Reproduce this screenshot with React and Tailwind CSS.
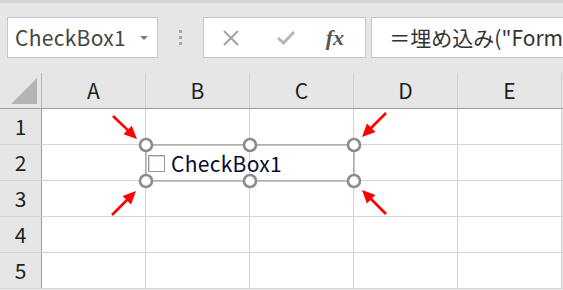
import React from "react";

const COLS = ["A", "B", "C", "D", "E"];
const ROWS = [1, 2, 3, 4, 5];

// red arrow: shaft + triangular head, tip at (x2, y2)
function Arrow({ x1, y1, x2, y2 }) {
    const dx = x2 - x1, dy = y2 - y1;
    const len = Math.hypot(dx, dy);
    const ux = dx / len, uy = dy / len;
    const hl = 13, hw = 6;
    const bx = x2 - ux * hl, by = y2 - uy * hl;
    const pts = [
        [x2, y2],
        [bx - uy * hw, by + ux * hw],
        [bx + uy * hw, by - ux * hw],
    ].map(p => p.join(",")).join(" ");
    return (
        <g>
            <line x1={x1} y1={y1} x2={bx + ux * 2} y2={by + uy * 2} stroke="#ff0000" strokeWidth="2.6" />
            <polygon points={pts} fill="#ff0000" />
        </g>
    );
}

export default function App() {
    const font = { fontFamily: '"Noto Sans CJK JP", "Noto Sans", sans-serif' };
    return (
        <div className="relative w-[563px] h-[290px] overflow-hidden bg-[#e6e6e6]" style={font}>
            <div className="h-[3px] bg-[#d6d6d6]" />
            {/* formula bar */}
            <div className="flex items-start h-[70px] pt-[14px]">
                <div className="ml-[7px] w-[151px] h-[41px] bg-white border border-[#c6c6c6] flex items-center pl-[7px] pr-[9px]">
                    <span className="text-[21px] text-[#444] leading-none flex-1 tracking-[0.3px]">CheckBox1</span>
                    <span className="w-0 h-0 border-l-[4px] border-r-[4px] border-t-[4px] border-l-transparent border-r-transparent border-t-[#7a7a7a]" />
                </div>
                <div className="ml-[21px] mt-[13px] flex flex-col gap-[3px]">
                    <div className="w-[3px] h-[3px] bg-[#a6a6a6]" />
                    <div className="w-[3px] h-[3px] bg-[#a6a6a6]" />
                    <div className="w-[3px] h-[3px] bg-[#a6a6a6]" />
                </div>
                <div className="ml-[21px] w-[164px] h-[41px] bg-white border border-[#c6c6c6] flex items-center">
                    <svg width="18" height="18" viewBox="0 0 18 18" className="ml-[18px]">
                        <path d="M2 2 L16 16 M16 2 L2 16" stroke="#a3a3a3" strokeWidth="2" />
                    </svg>
                    <svg width="20" height="16" viewBox="0 0 20 16" className="ml-[36px]">
                        <path d="M2 8 L7.5 13 L18 2" stroke="#b5b5b5" strokeWidth="3" fill="none" />
                    </svg>
                    <span className="ml-[30px] text-[22px] italic font-bold text-[#555] leading-none" style={{ fontFamily: '"Liberation Serif", serif' }}>fx</span>
                </div>
                <div className="ml-[5px] flex-1 h-[41px] bg-white border border-r-0 border-[#c6c6c6] flex items-center pl-[17px]">
                    <span className="text-[21px] text-[#333] leading-none whitespace-nowrap">＝埋め込み("Form</span>
                </div>
            </div>
            {/* column headers */}
            <div className="flex h-[36px] border-b border-[#9f9f9f]">
                <div className="w-[42px] shrink-0 border-r border-[#b5b5b5] relative">
                    <div className="absolute right-[4px] bottom-[4px] w-0 h-0 border-b-[26px] border-l-[26px] border-b-[#b4b4b4] border-l-transparent" />
                </div>
                {COLS.map(c => (
                    <div key={c} className="w-[104px] shrink-0 border-r border-[#d0d0d0] flex items-center justify-center text-[21px] text-[#222]">
                        {c}
                    </div>
                ))}
            </div>
            {/* rows */}
            {ROWS.map(r => (
                <div key={r} className="flex h-[36px] border-b border-[#d4d4d4]">
                    <div className="w-[42px] shrink-0 bg-[#e6e6e6] border-r border-[#9f9f9f] flex items-center justify-center text-[21px] text-[#222]">
                        {r}
                    </div>
                    {COLS.map(c => (
                        <div key={c} className="w-[104px] shrink-0 bg-white border-r border-[#d4d4d4]" />
                    ))}
                </div>
            ))}
            {/* checkbox control */}
            <div className="absolute left-[147px] top-[146px] w-[207px] h-[35px] flex items-center">
                <div className="ml-[1px] w-[17px] h-[17px] border border-[#9a9a9a] bg-white shadow-[inset_1px_1px_0_#d8d8d8]" />
                <span className="ml-[6px] text-[21px] text-[#0a0a30] leading-none tracking-[0.3px]">CheckBox1</span>
            </div>
            {/* selection + handles + arrows */}
            <svg className="absolute inset-0 pointer-events-none" width="563" height="290">
                <rect x="146" y="145" width="208" height="36" fill="none" stroke="#8c8c8c" strokeWidth="1" />
                {[146, 250, 354].map(x => [145, 181].map(y => (
                    <circle key={x + "-" + y} cx={x} cy={y} r="6" fill="#fff" stroke="#8c8c8c" strokeWidth="2.6" />
                )))}
                <Arrow x1={113} y1={116} x2={137} y2={139} />
                <Arrow x1={386} y1={113} x2={362} y2={137} />
                <Arrow x1={112} y1={215} x2={136} y2={191} />
                <Arrow x1={386} y1={214} x2={362} y2={190} />
            </svg>
        </div>
    );
}
